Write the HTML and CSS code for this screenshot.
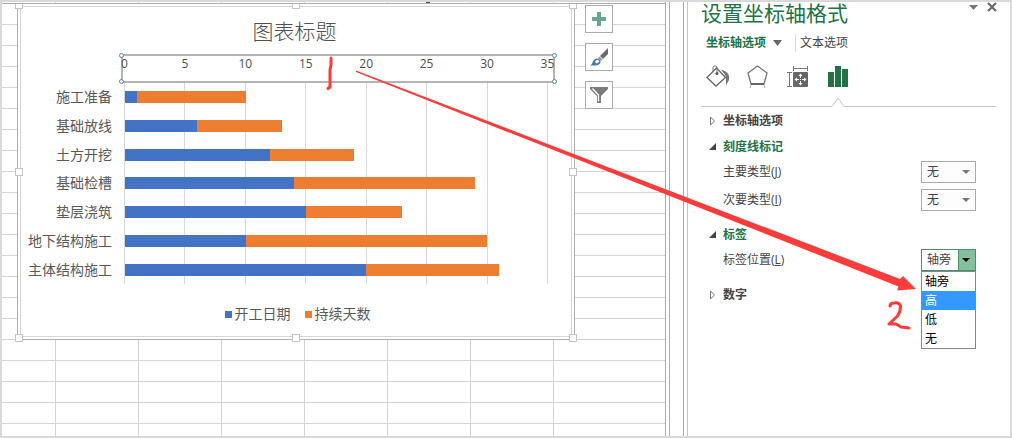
FILE: index.html
```html
<!DOCTYPE html>
<html lang="zh-CN">
<head>
<meta charset="utf-8">
<meta name="viewport" content="width=device-width, initial-scale=1">
<title>设置坐标轴格式</title>
<link rel="stylesheet" href="styles.css">
</head>
<body>
<div class="app">
  <main class="sheet">
    <section class="chart" aria-label="图表标题">
      <div class="chart-area">
        <h1 class="chart-title">图表标题</h1>
        <div class="axis">
          <div class="ticks">
            <span class="tick">0</span><span class="tick">5</span><span class="tick">10</span><span class="tick">15</span><span class="tick">20</span><span class="tick">25</span><span class="tick">30</span><span class="tick">35</span>
          </div>
          <i class="knob knob-tl"></i><i class="knob knob-tr"></i><i class="knob knob-bl"></i><i class="knob knob-br"></i>
        </div>
        <div class="plot">
          <div class="categories">
            <span>施工准备</span><span>基础放线</span><span>土方开挖</span><span>基础检槽</span><span>垫层浇筑</span><span>地下结构施工</span><span>主体结构施工</span>
          </div>
          <div class="bars">
            <div class="lines"><i></i><i></i><i></i><i></i><i></i><i></i><i></i><i></i></div>
            <div class="bar"><i class="start" style="width:2.86%"></i><i class="days" style="width:25.71%"></i></div>
            <div class="bar"><i class="start" style="width:17.14%"></i><i class="days" style="width:20%"></i></div>
            <div class="bar"><i class="start" style="width:34.29%"></i><i class="days" style="width:20%"></i></div>
            <div class="bar"><i class="start" style="width:40%"></i><i class="days" style="width:42.86%"></i></div>
            <div class="bar"><i class="start" style="width:42.86%"></i><i class="days" style="width:22.86%"></i></div>
            <div class="bar"><i class="start" style="width:28.57%"></i><i class="days" style="width:57.14%"></i></div>
            <div class="bar"><i class="start" style="width:57.14%"></i><i class="days" style="width:31.43%"></i></div>
          </div>
        </div>
        <div class="legend">
          <span class="key"><i class="swatch start"></i>开工日期</span>
          <span class="key"><i class="swatch days"></i>持续天数</span>
        </div>
      </div>
      <i class="handle top left"></i><i class="handle top center"></i><i class="handle top right"></i>
      <i class="handle middle left"></i><i class="handle middle right"></i>
      <i class="handle bottom left"></i><i class="handle bottom center"></i><i class="handle bottom right"></i>
    </section>
    <div class="chart-tools">
      <button class="tool" type="button" aria-label="图表元素">
        <svg width="26" height="26" viewBox="0 0 26 26"><path d="M11 6h4v5h5v4h-5v5h-4v-5H6v-4h5z" fill="#68a490"/></svg>
      </button>
      <button class="tool" type="button" aria-label="图表样式">
        <svg width="26" height="26" viewBox="0 0 26 26"><path d="M22 4v6l-5 5-3-3z" fill="#6b6b6b"/><path d="M13.500 12.500l3 3-1.500 1.500-3-3z" fill="#999"/><path d="M10.500 14.500c2-.5 4 1 4 3 0 3-3 4-6 4H4c2-1 2-2 3-4 .700-1.500 2-2.700 3.500-3z" fill="#4078b8"/><path d="M11 15.800c1.400 0 2.300.8 2.200 2.200l-2.700 1.500-1.700-1.700z" fill="#fff"/></svg>
      </button>
      <button class="tool" type="button" aria-label="图表筛选器">
        <svg width="26" height="26" viewBox="0 0 26 26"><path d="M4 5h18v2l-7 7v7h-4v-7L4 7z" fill="#7b7b7b"/><path d="M6.500 6.500l6 6.500v6.500" fill="none" stroke="#fff" stroke-width="1.300"/></svg>
      </button>
    </div>
  </main>
  <div class="splitter"></div>
  <aside class="panel">
    <header class="panel-head">
      <h2 class="panel-title">设置坐标轴格式</h2>
      <div class="window-buttons">
        <button class="plain" type="button" aria-label="任务窗格选项"><svg width="10" height="12" viewBox="0 0 10 12"><path d="M0 3h9L4.500 8z" fill="#777"/></svg></button>
        <button class="plain" type="button" aria-label="关闭"><svg width="10" height="12" viewBox="0 0 10 12"><path d="M1 1l8 8M9 1l-8 8" stroke="#6b6b6b" stroke-width="2.200"/></svg></button>
      </div>
    </header>
    <nav class="tabs">
      <button class="plain tab tab-active" type="button">坐标轴选项<svg width="9" height="6" viewBox="0 0 9 6"><path d="M0 0h9L4.500 6z" fill="#666"/></svg></button>
      <button class="plain tab tab-text" type="button">文本选项</button>
    </nav>
    <div class="icon-tabs">
      <button class="plain" type="button" aria-label="填充与线条"><svg width="24" height="24" viewBox="0 0 24 24"><path d="M10.500 3L1 12.500l9 8.500 9.500-8.500z" fill="#fff" stroke="#666" stroke-width="1.300"/><path d="M7 6V2.500Q7 1 8.500 1h1Q11 1 11 2.500V8" fill="none" stroke="#777"/><circle cx="11" cy="8.500" r="1.500" fill="#555"/><path d="M14.500 4.500C21 6 24 9 23 15l-3 5.500V14c0-4-2-6-5.500-9.500z" fill="#777"/></svg></button>
      <button class="plain" type="button" aria-label="效果"><svg width="24" height="24" viewBox="0 0 24 24"><path d="M11.500 1l9.500 7-3 11H5L2 8z" fill="#fff" stroke="#777" stroke-width="1.300"/><path d="M5 19h13" stroke="#666" stroke-width="2"/><path d="M5 20l-1 3M18 20l1 3" stroke="#aaa"/></svg></button>
      <button class="plain" type="button" aria-label="大小与属性"><svg width="24" height="24" viewBox="0 0 24 24"><rect x="7" y="7" width="15" height="15" rx="1" fill="#666"/><path d="M7.500 1v5M21.500 1v5M7.500 3.500h14M1 7.500h5M1 21.500h5M3.500 7.500v14" fill="none" stroke="#777"/><path d="M14.500 10v9M10 14.500h9" stroke="#fff" stroke-dasharray="3 1 1 1 3"/><path d="M12.500 11l2-2.500 2 2.500zM12.500 18l2 2.500 2-2.500zM11 12.500l-2.500 2 2.500 2zM18 12.500l2.500 2-2.500 2z" fill="#fff"/></svg></button>
      <button class="plain" type="button" aria-label="坐标轴选项"><svg width="24" height="24" viewBox="0 0 24 24"><path d="M2 7h6v15H2zM9 1h6v21H9zM16 4h6v18h-6z" fill="#217346"/></svg></button>
    </div>
    <div class="rule"><svg width="14" height="10" viewBox="0 0 14 10"><path d="M1 9h12v1H1z" fill="#fff"/><path d="M0 9.500h1L7 1l6 8.500h1" fill="#fff" stroke="#c6c6c6"/></svg></div>
    <div class="options">
      <button class="plain group" type="button"><svg width="7" height="10" viewBox="0 0 7 10"><path d="M1.500 1v8l4-4z" fill="#fff" stroke="#777"/></svg>坐标轴选项</button>
      <button class="plain group open" type="button"><svg width="7" height="10" viewBox="0 0 7 10"><path d="M7 1v7H0z" fill="#444"/></svg>刻度线标记</button>
      <div class="field"><label for="major">主要类型(<u>J</u>)</label><span class="combo"><select id="major"><option>无</option></select></span></div>
      <div class="field"><label for="minor">次要类型(<u>I</u>)</label><span class="combo"><select id="minor"><option>无</option></select></span></div>
      <button class="plain group open spaced" type="button"><svg width="7" height="10" viewBox="0 0 7 10"><path d="M7 1v7H0z" fill="#444"/></svg>标签</button>
      <div class="field"><label for="position">标签位置(<u>L</u>)</label><span class="combo combo-open"><select id="position"><option>轴旁</option><option>高</option><option>低</option><option>无</option></select>
        <ul class="menu" role="listbox" aria-label="标签位置"><li role="option">轴旁</li><li role="option" class="selected" aria-selected="true">高</li><li role="option">低</li><li role="option">无</li></ul></span></div>
      <button class="plain group spaced" type="button"><svg width="7" height="10" viewBox="0 0 7 10"><path d="M1.500 1v8l4-4z" fill="#fff" stroke="#777"/></svg>数字</button>
    </div>
  </aside>
  <svg class="notes" viewBox="0 0 1012 438" aria-hidden="true">
    <path d="M426 2h4v1h-4z" fill="#444"/>
    <path d="M356 70.500L900 279l3-3 13 13-19 1.500 1.500-4L356 72z" fill="#fc3c3a"/>
    <path d="M331 58v7l-1 5v17l-2 1.500" class="pen"/>
    <path d="M890 306q0-3 4-3 5-1 6.500 3 0 6-3 10l-8.500 8h7l5 3 8 1" class="pen"/>
  </svg>
</div>
</body>
</html>
```
FILE: styles.css
```css
* { box-sizing: border-box; }

body {
  margin: 0;
  font: 12px/20px "Open Sans", "Noto Sans CJK SC", sans-serif;
  color: #444;
  background: #fff;
}

h1, h2, ul { margin: 0; padding: 0; font-weight: 400; }
i { display: block; }
svg { display: block; flex: none; }

.app {
  position: relative;
  display: flex;
  min-height: 100vh;
  border: 2px solid #d9d9d9;
}

/* Worksheet */
.sheet {
  flex: 1;
  display: flex;
  align-items: flex-start;
  padding: 1px 0 0 15px;
  border-right: 1px solid #ababab;
  background:
    linear-gradient(#ababab, #ababab) 0 1px / 100% 1px no-repeat,
    repeating-linear-gradient(90deg, transparent 0 82px, #d4d4d4 82px 83px) -29px 0,
    repeating-linear-gradient(transparent 0 20px, #d4d4d4 20px 21px) 0 2px;
}

.chart {
  position: relative;
  flex: 1;
  padding: 2px;
  border: 1px solid #b0b0b0;
  background: #fff;
}

.chart-area {
  padding: 12px 23px 12px 7px;
  border: 1px solid #d4d4d4;
}

.chart-title {
  margin-left: 13px;
  font-size: 21px;
  font-weight: 300;
  line-height: 24px;
  text-align: center;
  color: #505050;
}

.axis {
  position: relative;
  height: 29px;
  margin: 11px -7px 0 93px;
  padding: 0 5px 0 1px;
  border: 2px solid #b4b4b4;
}

.ticks, .lines { display: flex; justify-content: space-between; }

.tick {
  display: flex;
  justify-content: center;
  width: 1px;
  line-height: 15px;
  color: #505050;
}

.knob {
  position: absolute;
  width: 5px;
  height: 5px;
  border: 1px solid #5585ad;
  border-radius: 50%;
  background: #fff;
}

.knob-tl { left: -4px; top: -3px; }
.knob-tr { right: -4px; top: -3px; }
.knob-bl { left: -4px; bottom: -3px; }
.knob-br { right: -4px; bottom: -3px; }

.plot { display: flex; }

.categories, .bars {
  display: grid;
  grid-template-rows: repeat(7, 1fr);
  align-items: center;
  height: 201px;
}

.categories {
  width: 96px;
  padding-right: 15px;
  font-size: 14px;
  text-align: right;
  color: #595959;
  white-space: nowrap;
  justify-items: end;
}

.bars { position: relative; flex: 1; }
.lines { position: absolute; inset: 0; }
.lines i { width: 1px; background: #d9d9d9; }
.bar { position: relative; display: flex; height: 12px; margin: 0 1px; }
.start { background: #4472c4; }
.days { background: #ed7d31; }

.legend {
  display: flex;
  justify-content: center;
  gap: 14px;
  margin: 20px 0 0 19px;
  font-size: 14px;
  color: #595959;
}

.key { display: flex; align-items: center; gap: 3px; }
.swatch { width: 7px; height: 7px; }

.handle {
  position: absolute;
  width: 8px;
  height: 8px;
  border: 1px solid #c6c6c6;
  background: #fff;
}

.top { top: 0; height: 5px; border-top: 0; }
.middle { top: calc(50% - 4px); }
.bottom { bottom: -3px; }
.left { left: -3px; }
.center { left: calc(50% - 4px); }
.right { right: -3px; }

.chart-tools {
  display: flex;
  flex-direction: column;
  gap: 10px;
  width: 90px;
  padding: 2px 0 0 10px;
}

.tool {
  width: 28px;
  height: 28px;
  padding: 0;
  border: 1px solid #ababab;
  background: #fff;
}

.splitter {
  width: 15px;
  margin-left: 3px;
  border: 1px solid #ababab;
  border-width: 0 1px;
}

/* Task pane */
.panel {
  width: 323px;
  margin-left: 3px;
  padding: 0 14px 0 13px;
  border-left: 1px solid #c6c6c6;
}

.plain {
  display: flex;
  align-items: center;
  padding: 0;
  border: 0;
  background: none;
  color: inherit;
  font: inherit;
}

.panel-head { display: flex; justify-content: space-between; }
.panel-title { font-size: 21px; line-height: 22px; color: #217346; }
.window-buttons { display: flex; align-items: flex-start; gap: 8px; margin-right: -1px; }

.tabs { display: flex; margin: 10px 0 0 5px; }
.tab { line-height: 18px; }
.tab-active { gap: 7px; font-weight: 700; color: #217346; }
.tab-text { margin-left: 13px; padding-left: 4px; border-left: 1px solid #d9d9d9; }

.icon-tabs { display: flex; gap: 16px; margin: 13px 0 0 5px; }

.rule { margin-top: 8px; padding-left: 130px; border-bottom: 1px solid #c6c6c6; }
.rule svg { margin-bottom: -1px; }

.options { padding: 4px 20px 0 8px; }
.group { gap: 7px; height: 20px; font-weight: 700; }
.group + .group { margin-top: 6px; }
.open { color: #217346; }
.spaced { margin-top: 14px; }

.field {
  display: flex;
  justify-content: space-between;
  align-items: center;
  margin-top: 4px;
  padding-left: 14px;
}

.field + .field { margin-top: 6px; }

.combo { position: relative; display: block; width: 55px; height: 22px; }

.combo select {
  width: 100%;
  height: 100%;
  padding: 0 0 0 5px;
  border: 1px solid #ababab;
  border-radius: 0;
  background: #fdfdfd;
  color: inherit;
  font: inherit;
  appearance: none;
}

.combo::after {
  content: "";
  position: absolute;
  right: 6px;
  top: 9px;
  border: solid transparent;
  border-width: 4px 4px 0;
  border-top-color: #777;
}

.combo-open select {
  border-color: #439467;
  background: linear-gradient(90deg, #fdfdfd 36px, #439467 36px 37px, #86bfa0 37px);
}

.combo-open::after { border-top-color: #000; }

.menu {
  position: absolute;
  top: 22px;
  left: 0;
  width: 100%;
  border: 1px solid #828790;
  background: #fff;
  color: #000;
  line-height: 19px;
  list-style: none;
}

.menu li { padding-left: 3px; }
.menu .selected { background: #3399ff; color: #fff; }

/* Hand-drawn marks over the window */
.notes {
  position: absolute;
  top: -2px;
  left: -2px;
  width: calc(100% + 4px);
  pointer-events: none;
}

.pen {
  fill: none;
  stroke: #fc3c3a;
  stroke-width: 3;
  stroke-linecap: round;
  stroke-linejoin: round;
}
```
